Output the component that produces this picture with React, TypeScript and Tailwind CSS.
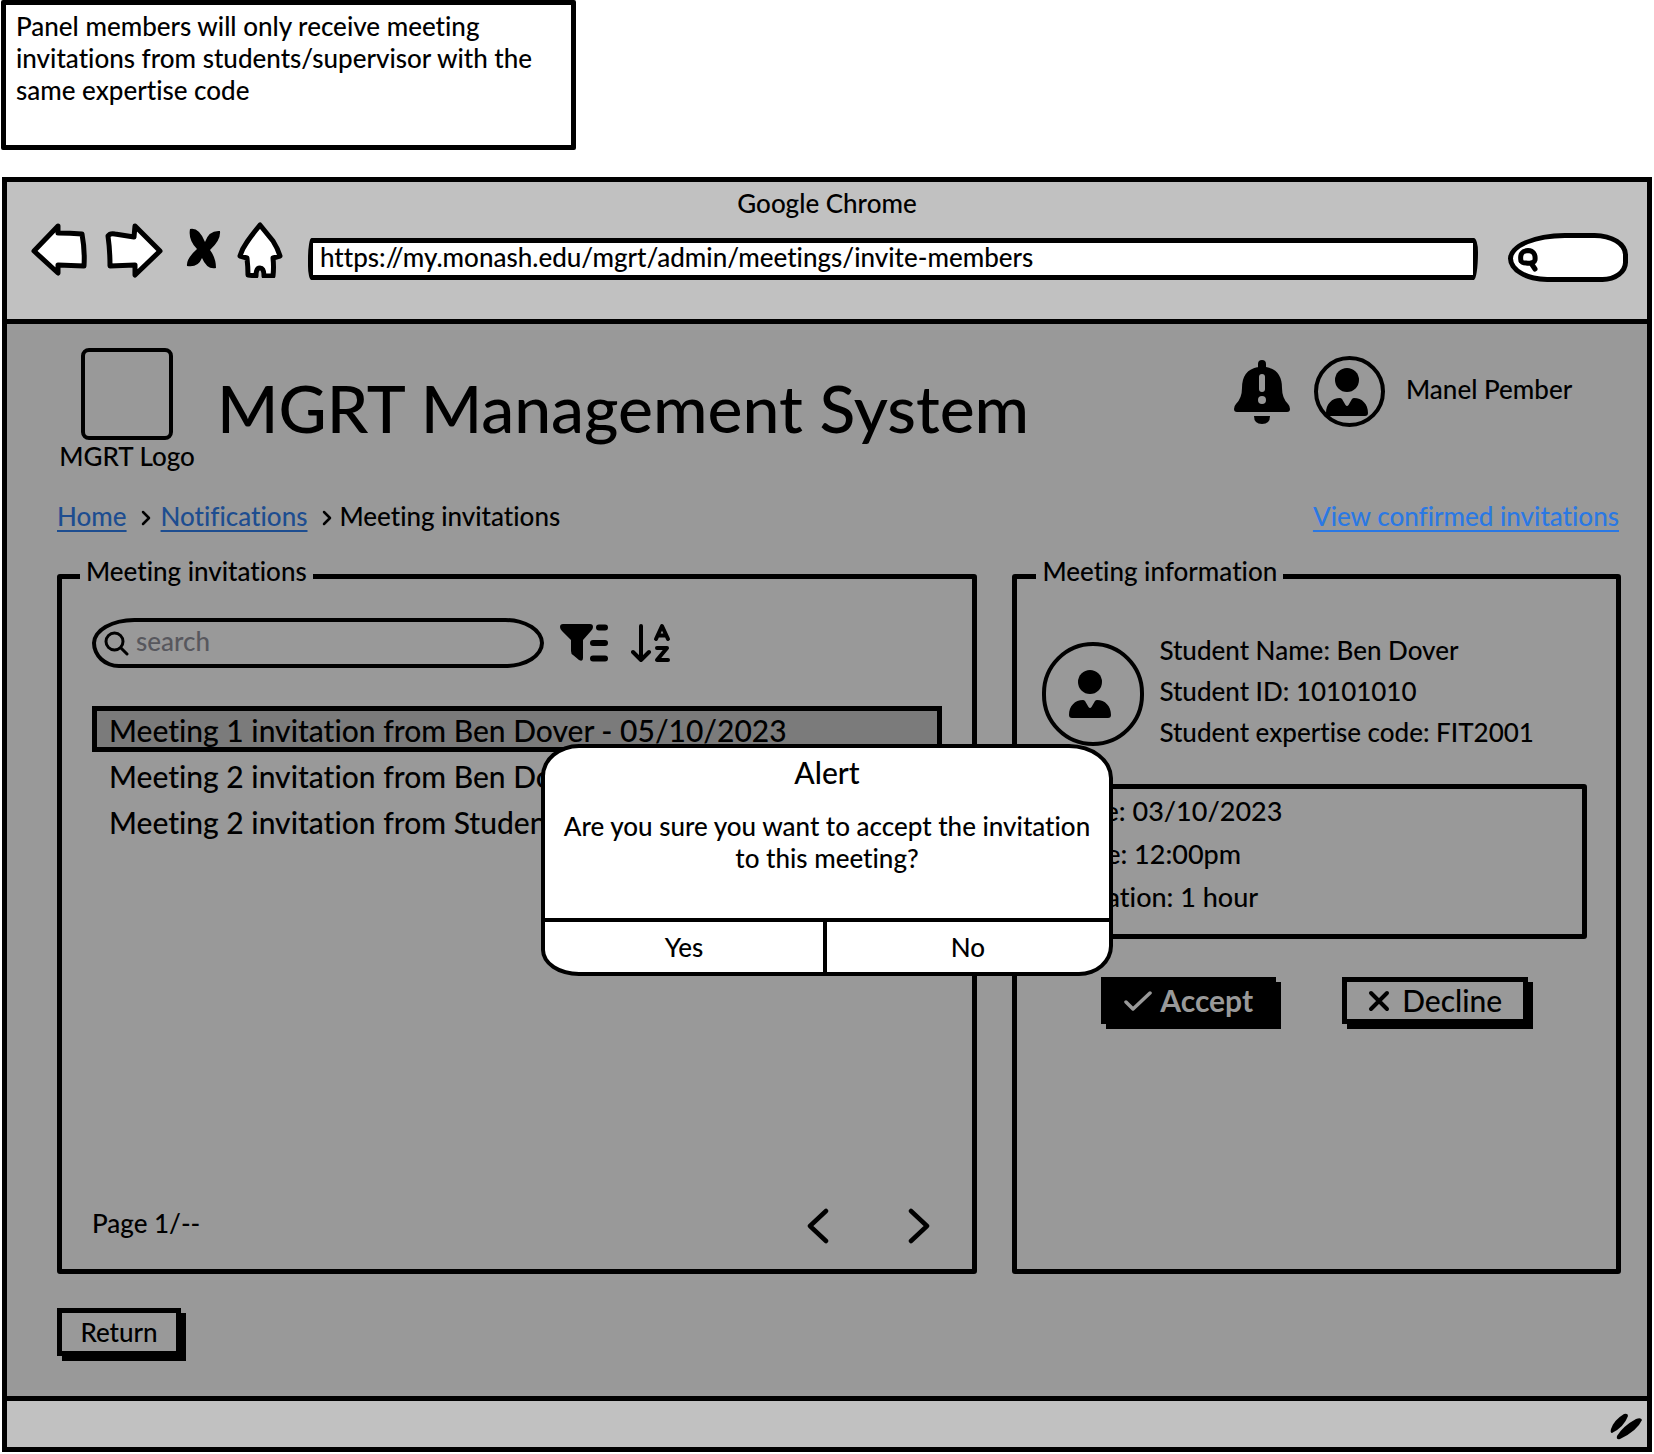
import type { ReactNode } from "react";

const field = "min-w-0 flex flex-col border-[5px] border-black rounded-[3px]";
const raised =
  "border-[5px] border-black shadow-[5px_5px_0_0_#000] flex items-center justify-center whitespace-nowrap";

function Person() {
  return (
    <svg viewBox="0 0 42 48" className="w-[42px] h-12" fill="#000" aria-hidden="true">
      <circle cx="21" cy="12" r="12" />
      <path d="M0 45C0 36 6 30 14 30Q15 30 16 31L19.500 37Q21 39 22.500 37L26 31Q27 30 28 30C36 30 42 36 42 45Q42 48 39 48H3Q0 48 0 45Z" />
    </svg>
  );
}

function Chevron({ back = false }: { back?: boolean }) {
  return (
    <svg
      viewBox="0 0 22 36"
      className="w-[22px] h-9"
      fill="none"
      stroke="#000"
      strokeWidth="4.500"
      strokeLinecap="round"
      strokeLinejoin="round"
      aria-hidden="true"
    >
      <path d={back ? "M19 3L3 18L19 33" : "M3 3L19 18L3 33"} />
    </svg>
  );
}

function CrumbArrow() {
  return (
    <svg viewBox="0 0 10 16" className="w-[10px] h-4 mt-1" fill="none" stroke="#000" strokeWidth="2.500" strokeLinecap="round" strokeLinejoin="round" aria-hidden="true">
      <path d="M2 2L8 8L2 14" />
    </svg>
  );
}

function NavButton({ label, children }: { label: string; children: ReactNode }) {
  return (
    <button type="button" aria-label={label} className="mb-1 shrink-0">
      {children}
    </button>
  );
}

function BrowserBar() {
  const outline = { fill: "#fff", stroke: "#000", strokeWidth: 5, strokeLinejoin: "round" as const };
  return (
    <header className="bg-[#c1c1c1] border-b-[5px] border-black pt-[5px] pb-[37px]">
      <div className="text-center leading-8">Google Chrome</div>
      <div className="mt-[3px] h-[60px] flex items-end gap-4 pl-6 pr-[19px]">
        <NavButton label="Back">
          <svg viewBox="0 0 58 56" className="w-[58px] h-14" {...outline}>
            <path d="M27 4L3 29L27 51V43L53 44Q54 28 51 12Q39 11 27 11Z" />
          </svg>
        </NavButton>
        <NavButton label="Forward">
          <svg viewBox="0 0 58 56" className="w-[58px] h-14" {...outline}>
            <path d="M30 4L55 29L30 53V43L5 44Q5 28 3 14Q5 11 10 12L29 15Z" />
          </svg>
        </NavButton>
        <NavButton label="Stop">
          <svg viewBox="0 0 42 56" className="w-[42px] h-14" fill="#000">
            <path d="M11 7Q20 5 26 20Q30 8 41 9Q42 18 31 28Q37 36 37 46Q28 48 23 36Q19 46 8 44Q7 37 18 27Q9 18 11 7Z" />
          </svg>
        </NavButton>
        <NavButton label="Home">
          <svg viewBox="0 0 46 56" className="w-[46px] h-14" {...outline}>
            <path d="M23 3Q14 14 10 20Q5 27 3 34L10 36Q11 45 11 53L19 54Q19 46 23 46Q27 46 27 54L36 54Q37 45 36 36L43 34Q41 27 36 19Z" />
          </svg>
        </NavButton>
        <input
          aria-label="Address"
          defaultValue="https://my.monash.edu/mgrt/admin/meetings/invite-members"
          className="ml-[9px] mb-0.5 h-[42px] flex-1 min-w-0 bg-white border-[5px] border-black rounded-[5px_6px_6px_5px/30px_20px_40px_20px] px-[7px] pb-1 outline-none"
        />
        <label className="ml-[14px] w-[120px] h-[49px] shrink-0 flex items-center bg-white border-[5px] border-black rounded-[58px_34px_26px_40px/26px_22px_20px_24px] pl-[4px]">
          <svg viewBox="0 0 22 26" className="w-[22px] h-[26px] shrink-0 mt-1" fill="none" stroke="#000" strokeWidth="5" strokeLinecap="round" aria-hidden="true">
            <path d="M4 14Q2 4 11 3.500Q19 4 18 13Q17 17 9 16Q5 16 4 14M14 16L18 22" />
          </svg>
          <input aria-label="Search the web" className="min-w-0 w-full bg-transparent outline-none" />
        </label>
      </div>
    </header>
  );
}

function PageHeader() {
  return (
    <div className="flex items-start">
      <div className="w-[140px] flex flex-col items-center">
        <div className="w-[92px] h-[92px] border-4 border-black rounded-lg" />
        <div className="leading-8 whitespace-nowrap">MGRT Logo</div>
      </div>
      <h1 className="ml-5 mt-6 text-[66px] leading-[72px] whitespace-nowrap">MGRT Management System</h1>
      <div className="ml-auto mt-2 mr-[44px] flex items-center">
        <svg viewBox="0 0 56 64" className="w-14 h-16 mr-6" fill="#000" role="img" aria-label="New notifications">
          <path d="M24 8V4Q24 0 28 0Q32 0 32 4V7Q48 10 48 28Q48 38 54 44Q56 46 56 49Q56 52 53 52H3Q0 52 0 49Q0 46 2 44Q8 38 8 28Q8 10 24 7Z" />
          <path d="M20 56H36Q36 64 28 64Q20 64 20 56Z" />
          <path d="M28 17V29" stroke="#999" strokeWidth="6" strokeLinecap="round" />
          <circle cx="28" cy="40" r="4" fill="#999" />
        </svg>
        <div className="w-[71px] h-[71px] border-4 border-black rounded-full flex items-center justify-center pr-1.5">
          <Person />
        </div>
        <div className="ml-[21px] mb-1.5 w-[171px] leading-8 whitespace-nowrap">Manel Pember</div>
      </div>
    </div>
  );
}

function Crumbs() {
  const link = "underline decoration-2 underline-offset-4";
  return (
    <nav aria-label="Breadcrumb" className="mt-7 flex items-center leading-8 whitespace-nowrap">
      <a href="#home" className={`${link} text-[#1d4d90]`}>Home</a>
      <span className="px-3.5 pr-2.5"><CrumbArrow /></span>
      <a href="#notifications" className={`${link} text-[#1d4d90]`}>Notifications</a>
      <span className="pl-3.5 pr-2"><CrumbArrow /></span>
      <span>Meeting invitations</span>
      <a href="#confirmed" className={`${link} text-[#2a78e4] ml-auto mr-0.5`}>View confirmed invitations</a>
    </nav>
  );
}

const invitations = [
  "Meeting 1 invitation from Ben Dover - 05/10/2023",
  "Meeting 2 invitation from Ben Dover - 05/10/2023",
  "Meeting 2 invitation from Student - 05/10/2023",
];

function InvitationList() {
  return (
    <fieldset className={`${field} px-[30px] pb-[25px]`}>
      <legend className="-ml-3 px-1.5 pb-2.5 leading-8">Meeting invitations</legend>
      <div className="mt-[21px] flex items-center">
        <label className="w-[452px] h-[50px] border-4 border-black rounded-[44px_40px_40px_28px/26px] flex items-center pl-2">
          <svg viewBox="0 0 25 25" className="w-[25px] h-[25px] shrink-0" fill="none" stroke="#000" strokeWidth="3" strokeLinecap="round" aria-hidden="true">
            <circle cx="10.500" cy="10.500" r="8.500" />
            <path d="M17 17L23 23" />
          </svg>
          <input type="search" placeholder="search" aria-label="Search invitations" className="ml-[7px] mr-4 pb-1 min-w-0 flex-1 bg-transparent outline-none placeholder:text-[#57575d]" />
        </label>
        <button type="button" aria-label="Filter" className="ml-4">
          <svg viewBox="0 0 48 38" className="w-12 h-[38px]" fill="#000">
            <path d="M3 0H30Q33 0 33 3Q33 5 31 7L23 16V34Q23 38 19 36L13 31Q11 30 11 27V16L2 7Q0 5 0 3Q0 0 3 0Z" />
            <path d="M39 3.500H45M33 19H45M33 34.500H45" stroke="#000" strokeWidth="6" strokeLinecap="round" />
          </svg>
        </button>
        <button type="button" aria-label="Sort A to Z" className="ml-[23px]">
          <svg viewBox="0 0 40 40" className="w-10 h-10" fill="none" stroke="#000" strokeWidth="4" strokeLinecap="round" strokeLinejoin="round">
            <path d="M10 3V37M2 29L10 37L18 29" />
            <path d="M25 16L31 3L37 16M27 12.500H35" />
            <path d="M26 25H36L26 37H37" />
          </svg>
        </button>
      </div>
      <ul className="mt-[38px] text-[30px] leading-[38px]">
        {invitations.map((text, i) => (
          <li
            key={text}
            className={`h-[46px] pl-3 border-[5px] whitespace-nowrap ${i === 0 ? "border-black bg-[#7b7b7b]" : "border-transparent"}`}
          >
            {text}
          </li>
        ))}
      </ul>
      <div className="mt-auto flex items-start">
        <span className="leading-[30px]">Page 1/--</span>
        <button type="button" aria-label="Previous page" className="ml-auto"><Chevron back /></button>
        <button type="button" aria-label="Next page" className="ml-[79px] mr-3"><Chevron /></button>
      </div>
    </fieldset>
  );
}

function MeetingInfo() {
  return (
    <fieldset className={`${field} pl-[25px] pr-[29px]`}>
      <legend className="-ml-1.5 px-1.5 pb-2.5 leading-8">Meeting information</legend>
      <div className="mt-[33px] flex items-center">
        <div className="w-[102px] h-[104px] border-4 border-black rounded-full shrink-0 flex items-center justify-center pr-1.5 mt-1">
          <Person />
        </div>
        <div className="ml-[15px] leading-[41px] whitespace-nowrap">
          <p>Student Name: Ben Dover</p>
          <p>Student ID: 10101010</p>
          <p>Student expertise code: FIT2001</p>
        </div>
      </div>
      <div className="mt-[31px] h-[155px] border-[5px] border-black rounded-[3px] pl-[14px] text-[27px] leading-[43px]">
        <p>Date: 03/10/2023</p>
        <p>Time: 12:00pm</p>
        <p>Duration: 1 hour</p>
      </div>
      <div className="mt-[38px] flex justify-center gap-[66px] text-[30px]">
        <button type="button" className={`${raised} w-[175px] h-[47px] bg-black text-[#999] font-bold`}>
          <svg viewBox="0 0 28 22" className="w-7 h-[22px] mr-2" fill="none" stroke="#999" strokeWidth="3.500" strokeLinecap="round" strokeLinejoin="round" aria-hidden="true">
            <path d="M2 12L9 19L26 3" />
          </svg>
          Accept
        </button>
        <button type="button" className={`${raised} w-[186px] h-[47px]`}>
          <svg viewBox="0 0 22 22" className="w-[22px] h-[22px] mr-3" fill="none" stroke="#000" strokeWidth="4" strokeLinecap="round" aria-hidden="true">
            <path d="M3 3L19 19M19 3L3 19" />
          </svg>
          Decline
        </button>
      </div>
    </fieldset>
  );
}

function AlertDialog() {
  return (
    <div className="absolute inset-0 flex items-center justify-center">
      <div
        role="alertdialog"
        aria-labelledby="alert-title"
        aria-describedby="alert-text"
        className="w-[572px] h-[232px] flex flex-col bg-white border-4 border-black rounded-[38px_44px_34px_38px/32px_34px_30px_26px] overflow-hidden text-center"
      >
        <h2 id="alert-title" className="pt-1.5 text-[30px] leading-9">Alert</h2>
        <p id="alert-text" className="mt-5 px-3 leading-8">
          Are you sure you want to accept the invitation to this meeting?
        </p>
        <div className="mt-auto h-[54px] grid grid-cols-2 border-t-4 border-black">
          <button type="button" className="border-r-4 border-black">Yes</button>
          <button type="button">No</button>
        </div>
      </div>
    </div>
  );
}

export default function App() {
  return (
    <div className="min-h-screen flex flex-col bg-white text-black text-[26px] font-medium font-['Lato','Liberation_Sans',sans-serif] [font-variant-ligatures:none] px-0.5 pb-0.5">
      <aside className="-ml-px w-[575px] h-[150px] border-[5px] border-black rounded-[2px] pl-2.5 pr-4 pt-[5px] leading-8">
        Panel members will only receive meeting invitations from students/supervisor with the same expertise code
      </aside>
      <div className="mt-[27px] flex-1 flex flex-col border-[5px] border-black">
        <BrowserBar />
        <main className="relative flex-1 flex flex-col bg-[#999] pl-[50px] pr-[26px] pt-6 pb-10">
          <PageHeader />
          <Crumbs />
          <div className="mt-[23px] flex-1 grid grid-cols-[921fr_609fr] gap-[35px]">
            <InvitationList />
            <MeetingInfo />
          </div>
          <button type="button" className={`${raised} self-start mt-[34px] w-[124px] h-12`}>Return</button>
          <AlertDialog />
        </main>
        <footer className="h-[51px] bg-[#c1c1c1] border-t-[5px] border-black flex items-end justify-end pr-1 pb-1.5">
          <svg viewBox="0 0 34 28" className="w-[34px] h-7" fill="#000" aria-hidden="true">
            <path d="M2 16Q5 7 15 1Q19 0 19 3Q15 14 3 20Q1 20 2 16Z" />
            <path d="M8 23Q14 13 27 6Q32 4 33 7Q28 18 11 26Q7 27 8 23Z" />
          </svg>
        </footer>
      </div>
    </div>
  );
}
